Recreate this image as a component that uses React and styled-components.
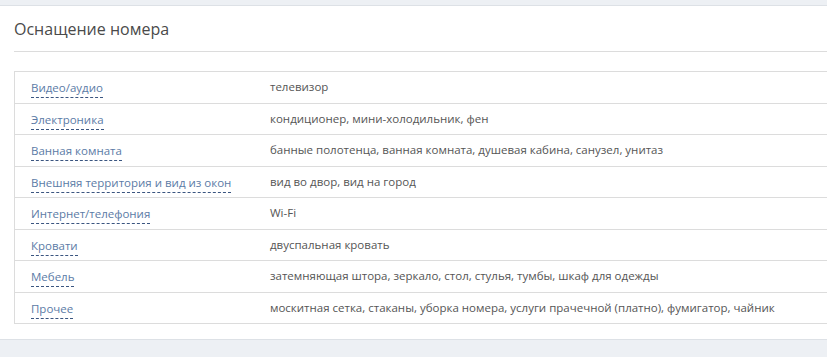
import React from 'react';
import styled, { createGlobalStyle } from 'styled-components';

const amenities = [
  { title: 'Видео/аудио', items: 'телевизор' },
  { title: 'Электроника', items: 'кондиционер, мини-холодильник, фен' },
  { title: 'Ванная комната', items: 'банные полотенца, ванная комната, душевая кабина, санузел, унитаз' },
  { title: 'Внешняя территория и вид из окон', items: 'вид во двор, вид на город' },
  { title: 'Интернет/телефония', items: 'Wi-Fi' },
  { title: 'Кровати', items: 'двуспальная кровать' },
  { title: 'Мебель', items: 'затемняющая штора, зеркало, стол, стулья, тумбы, шкаф для одежды' },
  {
    title: 'Прочее',
    items: 'москитная сетка, стаканы, уборка номера, услуги прачечной (платно), фумигатор, чайник',
  },
];

const GlobalStyle = createGlobalStyle`
  body {
    margin: 0;
    background: #edf0f4;
    font-family: "Open Sans", "Liberation Sans", sans-serif;
    overflow: hidden;
  }
`;

function App() {
  return (
    <>
      <GlobalStyle />
      <Page>
        <Card>
          <Title>Оснащение номера</Title>
          <Table>
            {amenities.map((row) => (
              <Row key={row.title}>
                <Label>
                  <Term>{row.title}</Term>
                </Label>
                <Value>{row.items}</Value>
              </Row>
            ))}
          </Table>
        </Card>
      </Page>
    </>
  );
}

export default App;

const Page = styled.div`
  padding-top: 5px;
  min-height: 357px;
`;

const Card = styled.section`
  background: #fff;
  border-top: 1px solid #dde1e6;
  border-bottom: 1px solid #dde1e6;
  padding: 0 0 15px 14px;
`;

const Title = styled.h2`
  margin: 0;
  padding: 11px 0 10px;
  font-size: 16px;
  line-height: 24px;
  font-weight: 400;
  color: #4a4a4a;
  border-bottom: 1px solid #dcdcdc;
`;

const Table = styled.div`
  margin-top: 19px;
  border: 1px solid #dcdcdc;
  border-right: none;
`;

const Row = styled.div`
  display: grid;
  grid-template-columns: 255px 1fr;
  align-items: center;
  height: 30.5px;

  & + & {
    border-top: 1px solid #dcdcdc;
  }
`;

const Label = styled.div`
  padding-left: 16px;
  padding-top: 2px;
  font-size: 11.5px;
  line-height: 16px;
`;

const Term = styled.span`
  color: #5b7ba6;
  border-bottom: 1px dashed #3a5580;
  padding-bottom: 2px;
`;

const Value = styled.div`
  font-size: 11.5px;
  line-height: 16px;
  color: #555;
`;
